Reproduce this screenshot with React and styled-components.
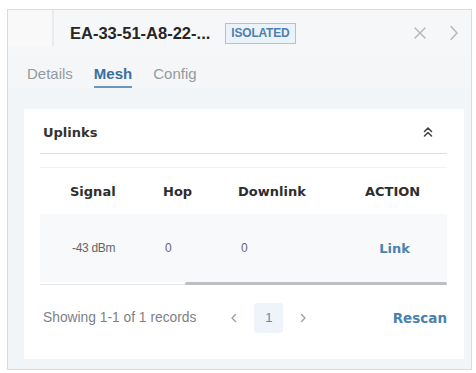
import React from "react";
import styled, { createGlobalStyle } from "styled-components";

const Global = createGlobalStyle`
  html, body { margin: 0; padding: 0; background: #ffffff; }
  body { font-family: "Liberation Sans", Arial, sans-serif; }
  * { box-sizing: border-box; }
`;

const Panel = styled.div`
  margin: 9px 0 0 7px;
  width: 465px;
  height: 361px;
  border: 1px solid #d9dcdf;
  background: #f2f5f8;
  display: flex;
  flex-direction: column;
  overflow: hidden;
`;

const Header = styled.div`
  height: 46px;
  display: flex;
  align-items: center;
  background: #f6f7f9;
`;

const BackZone = styled.div`
  width: 46px;
  align-self: stretch;
  margin-bottom: 10px;
  border-right: 2px solid #e9eaec;
  background: #f9f9fa;
`;

const Title = styled.div`
  margin-left: 16px;
  font-size: 16.5px;
  font-weight: bold;
  color: #262626;
`;

const Badge = styled.span`
  margin-left: 15px;
  height: 21px;
  padding: 0 5px;
  display: inline-flex;
  align-items: center;
  border: 1px solid #a8c3da;
  background: #eaf3fa;
  color: #4f80ae;
  font-size: 12px;
  font-weight: bold;
  letter-spacing: -0.2px;
`;

const HeaderIcons = styled.div`
  margin-left: auto;
  margin-right: 12px;
  display: flex;
  align-items: center;
  gap: 22px;
`;

const Tabs = styled.div`
  display: flex;
  align-items: flex-end;
  gap: 21px;
  padding-left: 19px;
  height: 32px;
  background: #f4f6f8;
`;

const Tab = styled.div`
  font-size: 15px;
  font-weight: ${(p) => (p.$active ? "bold" : "normal")};
  color: ${(p) => (p.$active ? "#3b6f9e" : "#959a9f")};
  padding-bottom: 4px;
  border-bottom: 2px solid ${(p) => (p.$active ? "#6a96bd" : "transparent")};
`;

const Body = styled.div`
  flex: 1;
  padding: 21px 7px 10px 16px;
  display: flex;
`;

const Card = styled.div`
  flex: 1;
  background: #ffffff;
  display: flex;
  flex-direction: column;
  padding: 0 17px 0 16px;
`;

const CardHeader = styled.div`
  height: 45px;
  display: flex;
  align-items: center;
  justify-content: space-between;
  padding: 2px 14px 0 3px;
  border-bottom: 1px solid #dcdfe2;
`;

const CardTitle = styled.div`
  font-family: "DejaVu Sans", Verdana, sans-serif;
  font-size: 13px;
  font-weight: bold;
  color: #333;
`;

const Spacer = styled.div`
  height: 14px;
  border-bottom: 1px solid #f0f2f4;
`;

const Row = styled.div`
  display: grid;
  grid-template-columns: 93px 75px 127px 56px;
  align-items: center;
  padding-left: 30px;
  height: ${(p) => p.$h}px;
  background: ${(p) => p.$bg || "transparent"};
`;

const HeadCell = styled.div`
  font-family: "DejaVu Sans", Verdana, sans-serif;
  font-size: 13px;
  font-weight: bold;
  color: #2e2e2e;
`;

const Cell = styled.div`
  font-size: 12px;
  color: #666;
  padding-left: ${(p) => p.$pl || 0}px;
  letter-spacing: -0.3px;
`;

const LinkCell = styled.div`
  font-family: "DejaVu Sans", Verdana, sans-serif;
  font-size: 13px;
  font-weight: bold;
  color: #4a82ae;
  text-align: center;
  padding-left: 3px;
`;

const Track = styled.div`
  height: 3px;
  display: flex;
  border-bottom: 1px solid #e4e6e9;
`;

const Thumb = styled.div`
  margin-left: 145px;
  flex: 1;
  height: 3px;
  background: #bcc0c5;
  border-radius: 2px;
`;

const Footer = styled.div`
  height: 65px;
  display: flex;
  align-items: center;
  padding: 0 0 0 3px;
`;

const Showing = styled.div`
  font-size: 13.8px;
  color: #7d8186;
`;

const Pager = styled.div`
  margin-left: 32px;
  display: flex;
  align-items: center;
  gap: 14px;
`;

const PageBox = styled.div`
  width: 29px;
  height: 30px;
  display: flex;
  align-items: center;
  justify-content: center;
  background: #eef4f9;
  border-radius: 3px;
  font-size: 13px;
  color: #5a8ab3;
`;

const Rescan = styled.div`
  margin-left: auto;
  font-family: "DejaVu Sans", Verdana, sans-serif;
  font-size: 13.5px;
  font-weight: bold;
  color: #4a82ae;
`;

const Chev = ({ dir, color = "#9aa0a6", size = 12 }) => (
  <svg width={size} height={size} viewBox="0 0 12 12" fill="none">
    <path
      d={dir === "left" ? "M7.5 2.5 L4 6 L7.5 9.5" : "M4.5 2.5 L8 6 L4.5 9.5"}
      stroke={color}
      strokeWidth="1.4"
      strokeLinecap="round"
      strokeLinejoin="round"
    />
  </svg>
);

export default function App() {
  return (
    <>
      <Global />
      <Panel>
        <Header>
          <BackZone />
          <Title>EA-33-51-A8-22-...</Title>
          <Badge>ISOLATED</Badge>
          <HeaderIcons>
            <svg width="14" height="14" viewBox="0 0 14 14">
              <path d="M2 2 L12 12 M12 2 L2 12" stroke="#b5b9bd" strokeWidth="1.5" strokeLinecap="round" />
            </svg>
            <svg width="10" height="16" viewBox="0 0 10 16">
              <path d="M2 1.5 L8 8 L2 14.5" stroke="#b5b9bd" strokeWidth="1.5" fill="none" strokeLinecap="round" strokeLinejoin="round" />
            </svg>
          </HeaderIcons>
        </Header>
        <Tabs>
          <Tab>Details</Tab>
          <Tab $active>Mesh</Tab>
          <Tab>Config</Tab>
        </Tabs>
        <Body>
          <Card>
            <CardHeader>
              <CardTitle>Uplinks</CardTitle>
              <svg width="10" height="12" viewBox="0 0 10 12">
                <path d="M1.5 5.5 L5 2 L8.5 5.5 M1.5 10 L5 6.5 L8.5 10" stroke="#444" strokeWidth="1.6" fill="none" strokeLinecap="round" strokeLinejoin="round" />
              </svg>
            </CardHeader>
            <Spacer />
            <Row $h={46}>
              <HeadCell>Signal</HeadCell>
              <HeadCell>Hop</HeadCell>
              <HeadCell>Downlink</HeadCell>
              <HeadCell>ACTION</HeadCell>
            </Row>
            <Row $h={68} $bg="#f7f9fb">
              <Cell $pl={2}>-43 dBm</Cell>
              <Cell $pl={2}>0</Cell>
              <Cell $pl={3}>0</Cell>
              <LinkCell>Link</LinkCell>
            </Row>
            <Track>
              <Thumb />
            </Track>
            <Footer>
              <Showing>Showing 1-1 of 1 records</Showing>
              <Pager>
                <Chev dir="left" />
                <PageBox>1</PageBox>
                <Chev dir="right" />
              </Pager>
              <Rescan>Rescan</Rescan>
            </Footer>
          </Card>
        </Body>
      </Panel>
    </>
  );
}
